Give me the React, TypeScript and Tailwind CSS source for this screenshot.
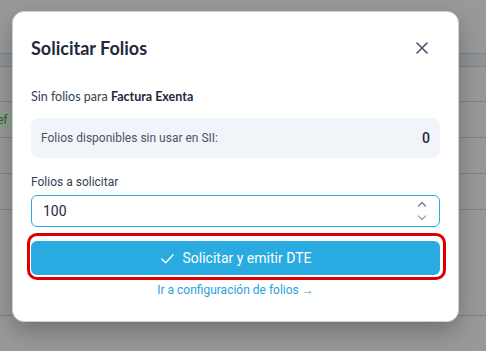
import React from "react";

export default function App() {
  return (
    <div className="relative w-[486px] h-[351px] overflow-hidden bg-[#999999]" style={{ fontFamily: "Roboto, sans-serif" }}>
      {/* underlying page (dimmed) */}
      <div className="flex flex-col">
        <div className="h-[53px]" />
        <div className="h-[13px] bg-[#8f9296] border-t border-[#7d8289]" />
        <div className="h-[35px] border-t border-[#7d8289]" />
        <div className="h-[36px] border-t border-[#7d8289] flex items-center">
          <div className="h-[20px] w-[14px] bg-[#8fa08f] text-[12px] leading-[20px] text-[#2f5f2f] -ml-[3px]">ef</div>
        </div>
        <div className="h-[36px] border-t border-[#7d8289]" />
        <div className="h-[36px] border-t border-[#7d8289]" />
        <div className="h-[106px] border-t border-[#7d8289]" />
        <div className="h-[30px] border-t border-[#7d8289]" />
      </div>

      {/* modal */}
      <div className="absolute left-[12px] top-[11px] w-[447px] h-[311px] bg-white rounded-[12px] border border-[#c9d1dc] shadow-[0_10px_25px_rgba(0,0,0,0.25)] px-[18px] pt-[24px]">
        <div className="flex items-center justify-between h-[24px]">
          <h2 className="text-[18px] font-bold text-[#1e293b]" style={{ fontFamily: "Lato, sans-serif" }}>Solicitar Folios</h2>
          <svg width="12" height="12" viewBox="0 0 12 12" className="mr-[12px]" fill="none" stroke="#475569" strokeWidth="1.6" strokeLinecap="round">
            <path d="M1 1L11 11M11 1L1 11" />
          </svg>
        </div>
        <p className="mt-[28px] text-[12.5px] text-[#334155] leading-[18px]" style={{ fontFamily: "Lato, sans-serif" }}>
          Sin folios para <span className="font-bold text-[#1e293b]">Factura Exenta</span>
        </p>
        <div className="mt-[12px] h-[40px] rounded-[8px] bg-[#f1f4f8] flex items-center justify-between pl-[10px] pr-[10px]">
          <span className="text-[12px] text-[#4b5563]">Folios disponibles sin usar en SII:</span>
          <span className="text-[14px] font-medium text-[#1e293b]">0</span>
        </div>
        <div className="mt-[15px] text-[12px] text-[#334155] leading-[18px]">Folios a solicitar</div>
        <div className="mt-[4px] h-[32px] rounded-[6px] border border-[#29abe2] flex items-center justify-between pl-[11px] pr-[12px]">
          <span className="text-[14px] text-[#1e293b]">100</span>
          <svg width="10" height="22" viewBox="0 0 10 22" fill="none" stroke="#6b7280" strokeWidth="1.2" strokeLinecap="round" strokeLinejoin="round">
            <path d="M1.5 6L5 2.5L8.5 6" />
            <path d="M1.5 16L5 19.5L8.5 16" stroke="#9ca3af" />
          </svg>
        </div>
        <div className="mt-[6px] -ml-[4px] -mr-[6px] rounded-[10px] border-[3px] border-[#dc0000] pl-[1px] pr-[3px] pt-[5px] pb-[2px]">
          <button className="w-full h-[34px] rounded-[6px] bg-[#29abe2] text-white text-[14px] flex items-center justify-center gap-[8px]">
            <svg width="15" height="15" viewBox="0 0 16 16" fill="none" stroke="white" strokeWidth="1.5" strokeLinecap="round" strokeLinejoin="round">
              <path d="M2 8.5L6 12.5L14 4" />
            </svg>
            Solicitar y emitir DTE
          </button>
        </div>
        <div className="mt-[1px] text-center text-[12px] text-[#29a3dd]">Ir a configuración de folios →</div>
      </div>
    </div>
  );
}
